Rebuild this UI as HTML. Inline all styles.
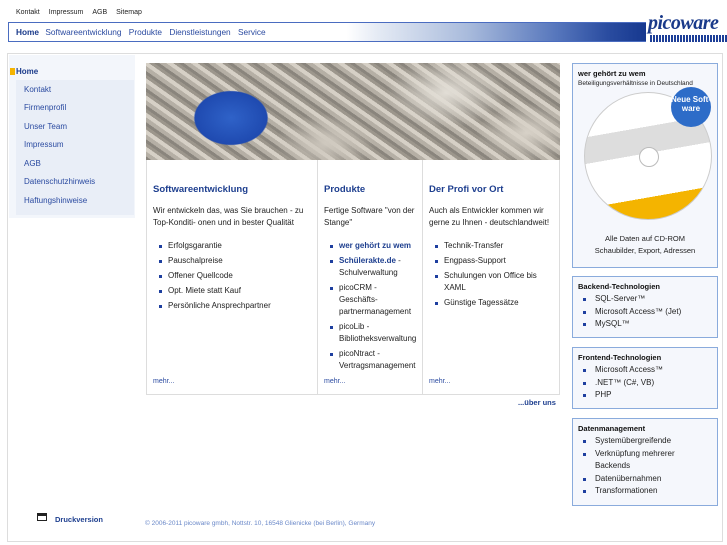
<!DOCTYPE html>
<html><head><meta charset="utf-8"><style>
*{margin:0;padding:0;box-sizing:border-box}
body{width:727px;height:545px;background:#fff;font-family:"Liberation Sans",sans-serif;font-size:8px;color:#222;position:relative;overflow:hidden}
.a{position:absolute}
.top{top:9px;left:16px;font-size:7px;color:#222}
.top span{margin-right:9px}
.nav{top:22px;left:8px;width:638px;height:20px;border:1px solid #4a6cc0;border-right:none;background:linear-gradient(90deg,#fff 0,#fff 53%,#e4eaf4 58%,#a9bbdc 72%,#5676bc 86%,#2a4ca0 94%,#16388f 100%)}
.nav div{position:absolute;top:4px;left:7px;font-size:8.3px;color:#2a4aa0;white-space:nowrap}
.nav b{color:#1a3a8a;margin-right:4px}
.nav span{margin-right:5px}
.logo{top:12px;left:648px;font-family:"Liberation Serif",serif;font-style:italic;font-weight:bold;font-size:20px;color:#1a3a8a;line-height:22px;letter-spacing:-0.5px;white-space:nowrap}
.bc{top:35px;left:650px;width:77px;height:7px;background:repeating-linear-gradient(90deg,#1d3f98 0 2px,#fff 2px 3px)}
.box{top:53px;left:7px;width:716px;height:489px;border:1px solid #ddd}
.side{top:55px;left:9px;width:126px;height:163px;background:#f3f6fb}
.sub{top:80px;left:16px;width:118px;height:135px;background:#e9eef7}
.sl{left:24px;font-size:8px;color:#2a4aa0}
.img{top:63px;left:146px;width:414px;height:97px;background:
radial-gradient(ellipse 45px 33px at 85px 55px,#2f62c8 0,#1f4ab0 80%,transparent 83%),
radial-gradient(ellipse 60px 35px at 300px 30px,#e2ded6,transparent),
radial-gradient(ellipse 50px 30px at 380px 70px,#d8d2c8,transparent),
radial-gradient(ellipse 50px 30px at 180px 80px,#cfc9bf,transparent),
repeating-linear-gradient(35deg,#8a857d 0 3px,#b5afa5 3px 7px,#d6d0c6 7px 11px,#9c968c 11px 14px)}
.cols{top:160px;left:146px;width:414px;height:235px;border:1px solid #ddd;border-top:none}
.col{position:absolute;top:0;height:234px;padding:24px 6px 0 6px}
.col h3{font-size:9.5px;color:#1e3f8f;margin-bottom:10px}
.col p{font-size:8px;line-height:12px;margin-bottom:11px}
.col ul{list-style:none;padding-left:6px}
.col li{font-size:8px;line-height:12px;margin-bottom:3px;padding-left:9px;position:relative}
.col li:before{content:"";position:absolute;left:0;top:5px;width:3px;height:3px;background:#1e3f9f}
.col .m{position:absolute;bottom:9px;left:6px;font-size:7px;color:#2a4aa0}
.rb{left:572px;width:146px;border:1px solid #8aabdc;background:#f5f7fc;padding:5px 5px}
.rb h4{font-size:7.5px;color:#111;margin-bottom:2px}
.rb ul{list-style:none;padding-left:5px}
.rb li{font-size:8px;line-height:12.5px;padding-left:12px;position:relative}
.rb li:before{content:"";position:absolute;left:0;top:5px;width:3px;height:3px;background:#1e3f9f}
</style></head><body>
<div class="a top"><span>Kontakt</span><span>Impressum</span><span>AGB</span><span>Sitemap</span></div>
<div class="a nav"><div><b>Home</b> <span>Softwareentwicklung</span> <span>Produkte</span> <span>Dienstleistungen</span> <span>Service</span></div></div>
<div class="a logo">picoware</div>
<div class="a bc"></div>
<div class="a box"></div>
<div class="a side"></div>
<div class="a" style="top:68px;left:10px;width:5px;height:7px;background:#f5b400"></div>
<div class="a" style="top:67px;left:16px;font-weight:bold;color:#1a3a8a;font-size:8px">Home</div>
<div class="a sub"></div>
<div class="a sl" style="top:85px">Kontakt</div>
<div class="a sl" style="top:103px">Firmenprofil</div>
<div class="a sl" style="top:122px">Unser Team</div>
<div class="a sl" style="top:140px">Impressum</div>
<div class="a sl" style="top:159px">AGB</div>
<div class="a sl" style="top:177px">Datenschutzhinweis</div>
<div class="a sl" style="top:196px">Haftungshinweise</div>
<div class="a img"></div>
<div class="a cols">
<div class="col" style="left:0;width:171px;border-right:1px solid #ddd">
<h3>Softwareentwicklung</h3>
<p>Wir entwickeln das, was Sie brauchen - zu Top-Konditi- onen und in bester Qualität</p>
<ul><li>Erfolgsgarantie</li><li>Pauschalpreise</li><li>Offener Quellcode</li><li>Opt. Miete statt Kauf</li><li>Persönliche Ansprechpartner</li></ul>
<div class="m">mehr...</div></div>
<div class="col" style="left:171px;width:105px;border-right:1px solid #ddd">
<h3>Produkte</h3>
<p>Fertige Software "von der Stange"</p>
<ul><li><b style="color:#1e3f8f">wer gehört zu wem</b></li><li><b style="color:#1e3f8f">Schülerakte.de</b> - Schulverwaltung</li><li>picoCRM -<br>Geschäfts- partnermanagement</li><li>picoLib - Bibliotheksverwaltung</li><li>picoNtract - Vertragsmanagement</li></ul>
<div class="m">mehr...</div></div>
<div class="col" style="left:276px;width:137px">
<h3>Der Profi vor Ort</h3>
<p>Auch als Entwickler kommen wir gerne zu Ihnen - deutschlandweit!</p>
<ul><li>Technik-Transfer</li><li>Engpass-Support</li><li>Schulungen von Office bis XAML</li><li>Günstige Tagessätze</li></ul>
<div class="m">mehr...</div></div>
</div>
<div class="a" style="top:398px;left:518px;font-size:7.5px;font-weight:bold;color:#1e3f8f">...über uns</div>
<div class="a rb" style="top:63px;height:205px">
<h4>wer gehört zu wem</h4>
<div style="font-size:6.5px">Beteiligungsverhältnisse in Deutschland</div>
<div style="position:absolute;top:28px;left:11px;width:128px;height:128px;border-radius:50%;border:1px solid #ccc;background:linear-gradient(170deg,#fff 0 30%,#ddd 30% 48%,#fff 48% 78%,#f4b400 78%)"><div style="position:absolute;left:54px;top:54px;width:20px;height:20px;border-radius:50%;background:#fff;border:1px solid #bbb"></div><div style="position:absolute;left:86px;top:-6px;width:40px;height:40px;border-radius:50%;background:#2d6cc8;color:#fff;font-weight:bold;font-size:8px;text-align:center;padding-top:8px;line-height:9px">Neue Soft- ware</div></div>
<div style="position:absolute;top:169px;left:0;width:100%;text-align:center;font-size:7.5px;line-height:12px">Alle Daten auf CD-ROM<br>Schaubilder, Export, Adressen</div>
</div>
<div class="a rb" style="top:276px;height:62px"><h4>Backend-Technologien</h4><ul><li>SQL-Server™</li><li>Microsoft Access™ (Jet)</li><li>MySQL™</li></ul></div>
<div class="a rb" style="top:347px;height:62px"><h4>Frontend-Technologien</h4><ul><li>Microsoft Access™</li><li>.NET™ (C#, VB)</li><li>PHP</li></ul></div>
<div class="a rb" style="top:418px;height:88px"><h4>Datenmanagement</h4><ul><li style="list-style:none">Systemübergreifende</li><li>Verknüpfung mehrerer<br>Backends</li><li>Datenübernahmen</li><li>Transformationen</li></ul></div>
<div class="a" style="top:513px;left:37px;width:10px;height:8px;border:1.5px solid #222;border-top-width:3px"></div>
<div class="a" style="top:515px;left:55px;font-size:7.5px;font-weight:bold;color:#1e3f8f">Druckversion</div>
<div class="a" style="top:520px;left:145px;font-size:6.5px;color:#6a88c8">© 2006-2011 picoware gmbh, Nottstr. 10, 16548 Glienicke (bei Berlin), Germany</div>
</body></html>
